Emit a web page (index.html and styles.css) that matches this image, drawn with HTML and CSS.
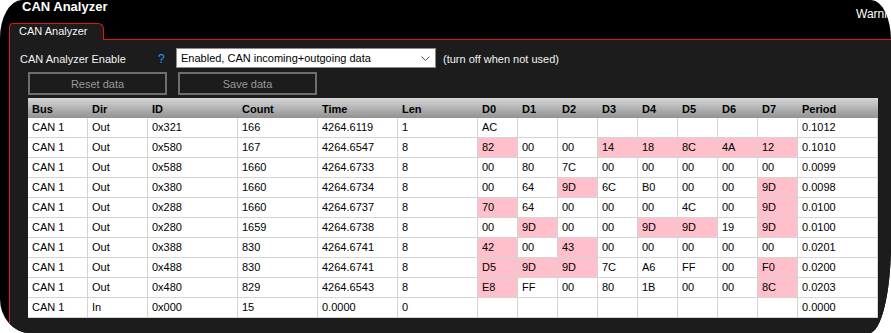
FILE: index.html
```html
<!DOCTYPE html>
<html>
  <head>
    <link rel="stylesheet" href="styles.css">
  </head>
  <body>
    <div class="window">
      <!-- Title bar -->
      <div class="titlebar">
        <span class="app-title">CAN Analyzer</span>
        <span class="warn">Warnings</span>
      </div>

      <!-- Tabs -->
      <div class="tabstrip">
        <div class="tab">CAN Analyzer</div>
      </div>

      <!-- Tab page -->
      <div class="panel">
        <div class="form-row">
          <span class="form-label">CAN Analyzer Enable</span>
          <span class="help">?</span>
          <div class="select">
            <span>Enabled, CAN incoming+outgoing data</span>
            <svg class="chevron" width="9" height="5" viewBox="0 0 9 5">
              <polyline points="0.5,0.5 4.5,4.5 8.5,0.5" fill="none" stroke="#5a5a5a" stroke-width="1"/>
            </svg>
          </div>
          <span class="note">(turn off when not used)</span>
        </div>

        <div class="btn-row">
          <button class="btn" disabled>Reset data</button>
          <button class="btn" disabled>Save data</button>
        </div>

        <table class="grid">
          <thead>
            <tr>
              <th class="c-bus">Bus</th>
              <th class="c-dir">Dir</th>
              <th class="c-id">ID</th>
              <th class="c-wide">Count</th>
              <th class="c-wide">Time</th>
              <th class="c-wide">Len</th>
              <th class="c-byte">D0</th>
              <th class="c-byte">D1</th>
              <th class="c-byte">D2</th>
              <th class="c-byte">D3</th>
              <th class="c-byte">D4</th>
              <th class="c-byte">D5</th>
              <th class="c-byte">D6</th>
              <th class="c-byte">D7</th>
              <th class="c-wide">Period</th>
            </tr>
          </thead>
          <tbody id="rows"></tbody>
        </table>
      </div>
    </div>

    <script>
      // bytes ending in "*" changed since the previous frame
      const frames = [
        ["CAN 1", "Out", "0x321", "166", "4264.6119", "1", ["AC", "", "", "", "", "", "", ""], "0.1012"],
        ["CAN 1", "Out", "0x580", "167", "4264.6547", "8", ["82*", "00", "00", "14*", "18*", "8C*", "4A*", "12*"], "0.1010"],
        ["CAN 1", "Out", "0x588", "1660", "4264.6733", "8", ["00", "80", "7C", "00", "00", "00", "00", "00"], "0.0099"],
        ["CAN 1", "Out", "0x380", "1660", "4264.6734", "8", ["00", "64", "9D*", "6C", "B0", "00", "00", "9D*"], "0.0098"],
        ["CAN 1", "Out", "0x288", "1660", "4264.6737", "8", ["70*", "64", "00", "00", "00", "4C", "00", "9D*"], "0.0100"],
        ["CAN 1", "Out", "0x280", "1659", "4264.6738", "8", ["00", "9D*", "00", "00", "9D*", "9D*", "19", "9D*"], "0.0100"],
        ["CAN 1", "Out", "0x388", "830", "4264.6741", "8", ["42*", "00", "43*", "00", "00", "00", "00", "00"], "0.0201"],
        ["CAN 1", "Out", "0x488", "830", "4264.6741", "8", ["D5*", "9D*", "9D*", "7C", "A6", "FF", "00", "F0*"], "0.0200"],
        ["CAN 1", "Out", "0x480", "829", "4264.6543", "8", ["E8*", "FF", "00", "80", "1B", "00", "00", "8C*"], "0.0203"],
        ["CAN 1", "In", "0x000", "15", "0.0000", "0", ["", "", "", "", "", "", "", ""], "0.0000"],
      ];

      function cell(text, changed) {
        const td = document.createElement("td");
        td.textContent = text;
        if (changed) td.className = "changed";
        return td;
      }

      const body = document.getElementById("rows");
      frames.forEach((f) => {
        const tr = document.createElement("tr");
        for (let i = 0; i < 6; i++) tr.appendChild(cell(f[i]));
        f[6].forEach((b) => {
          const changed = b.endsWith("*");
          tr.appendChild(cell(b.replace("*", ""), changed));
        });
        tr.appendChild(cell(f[7]));
        body.appendChild(tr);
      });
    </script>
  </body>
</html>
```

FILE: styles.css
```css
* {
  margin: 0;
  padding: 0;
  box-sizing: border-box;
}

body {
  background: #ffffff;
  font-family: "Liberation Sans", Arial, sans-serif;
  font-size: 11px;
}

.window {
  width: 891px;
  height: 333px;
  background: #000000;
  overflow: hidden;
  display: flex;
  flex-direction: column;
  border-top-left-radius: 22px 38px;
  border-top-right-radius: 20px 40px;
  border-bottom-right-radius: 22px 90px;
  border-bottom-left-radius: 30px 34px;
}

.titlebar {
  height: 23px;
  display: flex;
  color: #ffffff;
}

.app-title {
  padding-left: 22px;
  font-size: 13px;
  font-weight: bold;
  line-height: 13px;
}

.warn {
  margin-left: auto;
  width: 35px;
  white-space: nowrap;
  font-size: 12px;
  line-height: 12px;
  padding-top: 8px;
}

.tabstrip {
  height: 16px;
  display: flex;
}

.tab {
  position: relative;
  z-index: 1;
  margin-left: 9px;
  width: 95px;
  height: 17px;
  background: #1c1c1c;
  border: 1px solid #e0161b;
  border-bottom: none;
  border-radius: 4px 6px 0 0;
  padding-left: 9px;
  line-height: 15px;
  color: #f4f4f4;
}

.panel {
  flex: 1;
  margin-left: 9px;
  background: #1c1c1c;
  border-top: 1px solid #e0161b;
  border-left: 1px solid #e0161b;
  padding: 8px 0 0 0;
  color: #f2f2f2;
}

.form-row {
  display: flex;
  align-items: center;
  height: 20px;
  padding-left: 10px;
}

.form-label {
  width: 138px;
  padding-top: 1px;
}

.help {
  width: 18px;
  color: #22a0ff;
  font-size: 12px;
  padding-top: 2px;
}

.select {
  width: 260px;
  height: 20px;
  background: #ffffff;
  border: 1px solid #8c8c8c;
  color: #000000;
  display: flex;
  align-items: center;
  justify-content: space-between;
  padding: 0 5px 0 4px;
  line-height: 18px;
}

.chevron {
  display: block;
}

.note {
  margin-left: 7px;
  padding-top: 1px;
}

.btn-row {
  display: flex;
  gap: 11px;
  margin: 4px 0 0 18px;
}

.btn {
  width: 139px;
  height: 23px;
  background: transparent;
  border: 2px solid #6e6e6e;
  color: #999999;
  font-family: inherit;
  font-size: 11px;
}

.grid {
  margin: 3px 0 0 18px;
  border-collapse: separate;
  border-spacing: 0;
  table-layout: fixed;
  width: 850px;
  background: #ffffff;
}

.grid th {
  height: 20px;
  padding: 1px 0 0 4px;
  text-align: left;
  font-weight: bold;
  color: #000000;
  background: linear-gradient(#d6d6d6, #b4b4b4 50%, #929292);
}

.grid td {
  height: 20px;
  padding: 0 0 0 4px;
  line-height: 19px;
  color: #000000;
  border-right: 1px solid #d4d4d4;
  border-bottom: 1px solid #d4d4d4;
  white-space: nowrap;
}

.grid td.changed {
  background: #ffc0cb;
}

.c-bus,
.c-dir {
  width: 60px;
}

.c-id {
  width: 90px;
}

.c-wide {
  width: 80px;
}

.c-byte {
  width: 40px;
}
```
